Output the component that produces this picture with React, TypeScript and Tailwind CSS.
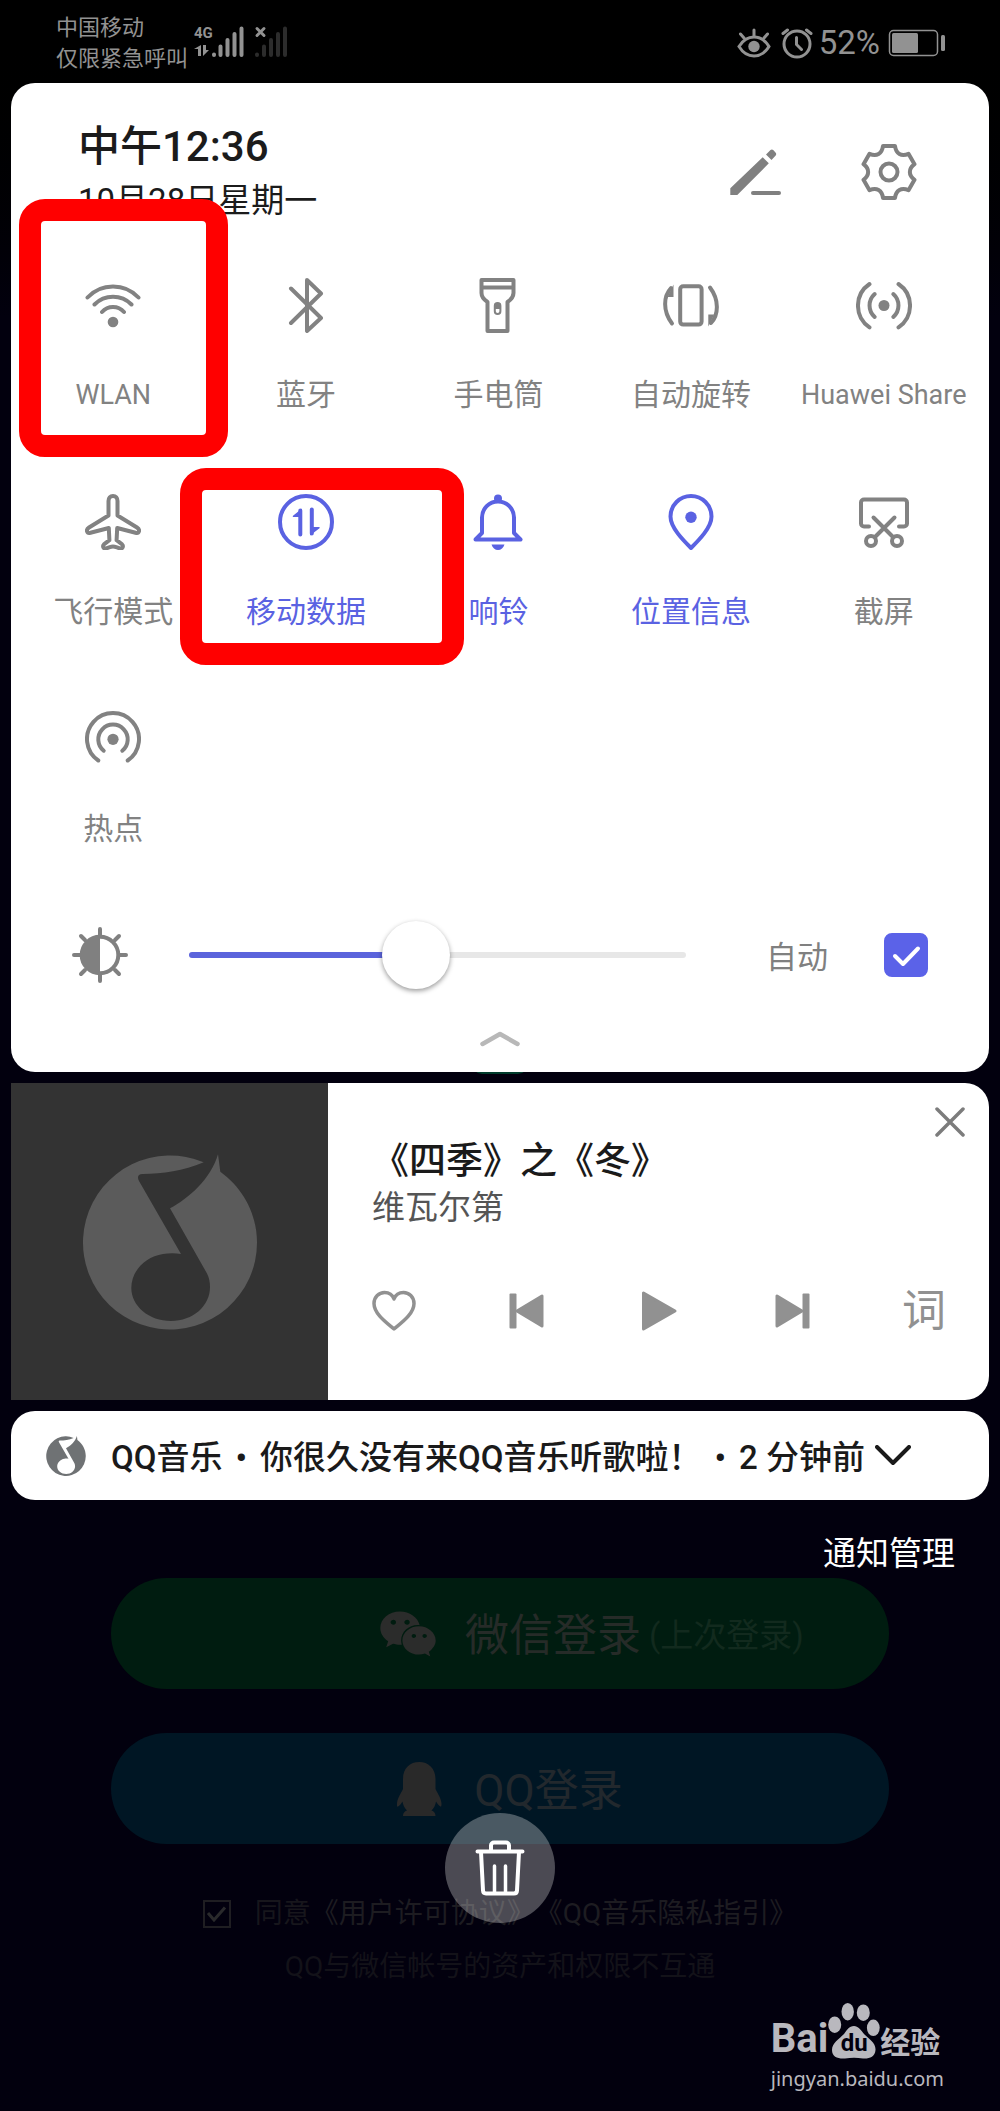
import { useState } from "react";
import type { CSSProperties, ReactNode } from "react";
import clsx from "clsx";
import { FaWeixin } from "react-icons/fa";

type Tile = {
  label: string;
  active?: boolean;
  latin?: boolean;
  icon: ReactNode;
};

const TILES: Tile[] = [
  {
    label: "WLAN",
    latin: true,
    icon: (
      <>
        <path d="M2.5 20.5A35 35 0 0 1 53.5 20.5M9.5 27.5A26 26 0 0 1 46.5 27.5M17 35A14.6 14.6 0 0 1 39 35" />
        <circle cx="28" cy="45" r="5.3" fill="currentColor" stroke="none" />
      </>
    ),
  },
  {
    label: "蓝牙",
    icon: <path d="M13 11.5L43 41 29 54V3L43 16.5 13 46" />,
  },
  {
    label: "手电筒",
    icon: (
      <>
        <path d="M11.5 3h32v13c0 4-3 7-6 9v29h-20V25c-3-2-6-5-6-9zM11.5 10.5h32" />
        <rect x="24.8" y="26" width="5.6" height="11" rx="2.8" strokeWidth="2" />
        <rect x="24.8" y="26" width="5.6" height="6" fill="currentColor" stroke="none" />
      </>
    ),
  },
  {
    label: "自动旋转",
    icon: (
      <>
        <rect x="17.2" y="9.2" width="21.4" height="38.4" rx="3" />
        <path d="M9 46.5C-.5 34 .5 19 8 11M47 10.5C56.5 23 55.5 38 48 46" />
        <path d="M10.5 7.5V20H4.5zM45.3 49.5V37.5h6z" fill="currentColor" stroke="none" />
      </>
    ),
  },
  {
    label: "Huawei Share",
    latin: true,
    icon: (
      <>
        <circle cx="28" cy="28.5" r="5.5" fill="currentColor" stroke="none" />
        <path d="M18.7 17a15.4 15.4 0 0 0 0 23M37.3 17a15.4 15.4 0 0 1 0 23" />
        <path d="M13.5 7a26.2 26.2 0 0 0 0 43.4M42.5 7a26.2 26.2 0 0 1 0 43.4" />
      </>
    ),
  },
  {
    label: "飞行模式",
    icon: (
      <path d="M28 2c-2.8 0-4.5 2-4.5 5v14.5L4 33.5c-2 1.3-2.4 2.6-1.9 4 .4 1.3 1.8 1.7 3.4 1.3L23.8 34l.6 12.2-5.5 4.2c-1.5 1.4-.7 4 1 4 2.8 0 5.4-1.9 8.1-1.9s5.3 1.9 8.1 1.9c1.7 0 2.5-2.6 1-4l-5.5-4.2.6-12.2 18.3 4.8c1.6.4 3 0 3.4-1.3.5-1.4.1-2.7-1.9-4L32.5 21.5V7c0-3-1.7-5-4.5-5z" />
    ),
  },
  {
    label: "移动数据",
    active: true,
    icon: (
      <>
        <circle cx="28" cy="28" r="26" />
        <path d="M22.3 16.5v24M33.8 15.5v24" />
        <path d="M24 14.5V23h-8.5c-.8 0-1-.8-.5-1.3zM32 41.5V33h9c.8 0 1 .8.5 1.3z" fill="currentColor" stroke="none" />
      </>
    ),
  },
  {
    label: "响铃",
    active: true,
    icon: (
      <>
        <path d="M5.5 45.5L12 39V23.5a16 16 0 0 1 32 0V39l6.5 6.5z" />
        <circle cx="28" cy="4.5" r="4" fill="currentColor" stroke="none" />
        <path d="M21.5 50.5h13c-1 3.5-3.5 5.5-6.5 5.5s-5.5-2-6.5-5.5z" fill="currentColor" stroke="none" />
      </>
    ),
  },
  {
    label: "位置信息",
    active: true,
    icon: (
      <>
        <path d="M28 54C20 46 7.5 33.5 7.5 22.5a20.5 20.5 0 0 1 41 0C48.5 33.5 36 46 28 54z" />
        <circle cx="28" cy="23.3" r="5.7" fill="currentColor" stroke="none" />
      </>
    ),
  },
  {
    label: "截屏",
    icon: (
      <>
        <path d="M13 32.5H8a3 3 0 0 1-3-3v-21a3 3 0 0 1 3-3h40a3 3 0 0 1 3 3v21a3 3 0 0 1-3 3h-5" />
        <path d="M17.5 23.5L37 43M38.5 23.5L19 43" />
        <circle cx="15" cy="47" r="5" />
        <circle cx="41" cy="47" r="5" />
      </>
    ),
  },
  {
    label: "热点",
    icon: (
      <>
        <circle cx="28" cy="28.3" r="5.6" fill="currentColor" stroke="none" />
        <path d="M13.3 49.5a26 26 0 1 1 29.4 0" />
        <path d="M18.7 39.7a14.7 14.7 0 1 1 18.6 0" />
      </>
    ),
  },
];

const Icon = ({ children }: { children: ReactNode }) => (
  <svg
    viewBox="0 0 56 56"
    className="size-14 shrink-0"
    fill="none"
    stroke="currentColor"
    strokeWidth="4"
    strokeLinecap="round"
    strokeLinejoin="round"
    aria-hidden="true"
  >
    {children}
  </svg>
);

const NoteLogo = ({ className }: { className: string }) => (
  <svg viewBox="0 0 174 176" className={className} fill="currentColor" aria-hidden="true">
    <path d="M120.7 8.3C100 17 80 20 59.5 20C55 20 54 23 56 27L98 100C91 98.8 85 99.3 80 100C62 103 48.3 117 48.3 134C48.3 152 66 167 88 167C110 167 127 152 127 133C127 128 126 123 124 119.5L87 54.3C105 45 128 25 135 .3L137.3 17.7C160 34 174 60 174 88.5A87 87 0 1 1 120.7 8.3z" />
  </svg>
);

const StatusBar = () => (
  <header className="flex h-[83px] items-start justify-between pr-[54px] pl-14 text-[#929292]">
    <div className="flex">
      <div className="pt-3 text-[22px] leading-[31px]">
        <p>中国移动</p>
        <p>仅限紧急呼叫</p>
      </div>
      <div className="ml-1.5 flex pt-[26px]">
        <div className="w-[17px]">
          <p className="text-[15px] leading-[14px] font-bold">4G</p>
          <svg viewBox="0 0 16 12" className="mt-1 h-3 w-4" fill="currentColor" aria-hidden="true">
            <path d="M7 1v11H4V5H0zM9 1h3v5h3l-6 6z" />
          </svg>
        </div>
        <svg viewBox="0 0 34 31" className="h-[31px] w-[34px]" stroke="currentColor" strokeWidth="4" strokeLinecap="round" aria-hidden="true">
          <path d="M3 28.5v.5M9.5 20.5V29M16.5 14V29M23.5 8V29M30.5 2.5V29" />
        </svg>
        <svg viewBox="0 0 34 31" className="ml-[9px] h-[31px] w-[34px]" stroke="#2c2c2c" strokeWidth="4" strokeLinecap="round" aria-hidden="true">
          <path d="M3 28.5v.5M10 20.5V29M17 14V29M24 8V29M31 2.5V29" />
          <path d="M3 2.5l7 7M10 2.5l-7 7" stroke="#929292" strokeWidth="3" />
        </svg>
      </div>
    </div>

    <div className="flex h-[86px] items-center">
      <svg viewBox="0 0 34 30" className="h-[30px] w-[34px]" fill="none" stroke="currentColor" strokeWidth="3" strokeLinecap="round" aria-hidden="true">
        <path d="M2 18.5C6 12 11 9 17 9s11 3 15 9.5C28 25 23 28 17 28S6 25 2 18.5z" />
        <path d="M17 2v6M3.5 6l3.5 4M30.5 6L27 10" />
        <circle cx="17" cy="18.5" r="5.7" fill="currentColor" stroke="none" />
      </svg>
      <svg viewBox="0 0 32 32" className="ml-2.5 size-8" fill="none" stroke="currentColor" strokeWidth="3" strokeLinecap="round" aria-hidden="true">
        <circle cx="16" cy="17" r="13" />
        <path d="M15.5 10.5v7l5 5M2 6.5L6.5 3M30 6.5L25.5 3" />
      </svg>
      <span className="ml-1.5 text-[33px] leading-10">52%</span>
      <svg viewBox="0 0 58 28" className="ml-2 h-7 w-[58px]" fill="currentColor" aria-hidden="true">
        <rect x="1.5" y="1.5" width="48" height="25" rx="4" fill="none" stroke="currentColor" strokeWidth="1.5" />
        <rect x="4" y="4" width="26" height="20" rx="1.5" />
        <rect x="53" y="6" width="4" height="16" rx="1.5" />
      </svg>
    </div>
  </header>
);

const QuickSettings = () => {
  const [brightness, setBrightness] = useState(45);
  const [auto, setAuto] = useState(true);

  return (
    <section className="relative">
      {/* Glow of the app below, peeking out under the panel */}
      <div className="absolute -bottom-0.5 left-1/2 -z-10 h-5 w-14 -translate-x-1/2 rounded-full bg-[#003d2c]" />

      <div className="rounded-3xl bg-white pt-10 pb-[25px]">
        <div className="flex items-center justify-between pr-[72px] pl-[67px]">
          <div className="text-[#1b1b1b]">
            <h1 className="text-[42px] leading-[48px] font-medium">中午12:36</h1>
            <p className="mt-2.5 text-[33px] leading-10">10月28日星期一</p>
          </div>
          <div className="flex gap-[77px] text-[#808080]">
            <button type="button" aria-label="编辑">
              <Icon>
                <path d="M2.3 44.3L34.7 13.2 40.8 19.3 9.3 51H2.3zM38 10.5l4.5-4.5q1.5-1 3 .3l2.2 2.4q1 1.3 0 2.8L43.5 16z" fill="currentColor" stroke="none" />
                <path d="M25 49h26" />
              </Icon>
            </button>
            <button type="button" aria-label="设置">
              <Icon>
                <path d="M22 2H34C35 9.8 40.3 12.8 47.5 9.8L53.5 20.2C47.3 24.9 47.3 31.1 53.5 35.8L47.5 46.2C40.3 43.2 35 46.2 34 54H22C21 46.2 15.7 43.2 8.5 46.2L2.5 35.8C8.7 31.1 8.7 24.9 2.5 20.2L8.5 9.8C15.7 12.8 21 9.8 22 2z" />
                <circle cx="28" cy="28" r="8.5" />
              </Icon>
            </button>
          </div>
        </div>

        <div className="mt-14 grid grid-cols-5 gap-y-[79px] pr-[9px] pl-1.5">
          {TILES.map(({ label, active, latin, icon }) => (
            <button
              key={label}
              type="button"
              aria-pressed={!!active}
              className={clsx(
                "flex flex-col items-center gap-[42px]",
                active ? "text-[#5a62e2]" : "text-[#828282]"
              )}
            >
              <Icon>{icon}</Icon>
              <span className={clsx("leading-10 whitespace-nowrap", latin ? "text-[27px]" : "text-[30px]")}>
                {label}
              </span>
            </button>
          ))}
        </div>

        {/* Brightness */}
        <div className="mt-[72px] flex items-center px-[61px] text-[#808080]">
          <Icon>
            <circle cx="28" cy="28" r="18.3" />
            <path d="M28 10a18 18 0 0 0 0 36z" fill="currentColor" stroke="none" />
            <path d="M28 2v6M28 48v6M2 28h6M48 28h6M9 9l4 4M47 9l-4 4M9 47l4-4M47 47l-4-4" />
          </Icon>
          <input
            type="range"
            aria-label="亮度"
            value={brightness}
            onChange={(e) => setBrightness(Number(e.target.value))}
            style={{ "--fill": `${brightness}%` } as CSSProperties}
            className="ml-[61px] h-[68px] min-w-0 flex-1 appearance-none bg-transparent [&::-webkit-slider-runnable-track]:h-1.5 [&::-webkit-slider-runnable-track]:rounded-full [&::-webkit-slider-runnable-track]:bg-[linear-gradient(to_right,#5b64dc_var(--fill),#e7e7e7_var(--fill))] [&::-webkit-slider-thumb]:mt-[-31px] [&::-webkit-slider-thumb]:size-[68px] [&::-webkit-slider-thumb]:appearance-none [&::-webkit-slider-thumb]:rounded-full [&::-webkit-slider-thumb]:bg-white [&::-webkit-slider-thumb]:shadow-[0_2px_5px_rgba(0,0,0,0.4)]"
          />
          <label htmlFor="auto" className="ml-20 pt-1.5 text-[31px] leading-10">
            自动
          </label>
          <span className="ml-14 grid size-11">
            <input
              id="auto"
              type="checkbox"
              checked={auto}
              onChange={(e) => setAuto(e.target.checked)}
              className="peer col-start-1 row-start-1 appearance-none rounded-lg border-2 border-[#5b62e8] checked:bg-[#5b62e8]"
            />
            <svg viewBox="0 0 44 44" className="pointer-events-none invisible col-start-1 row-start-1 peer-checked:visible" fill="none" stroke="white" strokeWidth="4" strokeLinecap="round" strokeLinejoin="round" aria-hidden="true">
              <path d="M11 23l8 8L34 15.5" />
            </svg>
          </span>
        </div>

        <button type="button" aria-label="收起" className="mx-auto mt-[42px] block text-[#b8b8b8]">
          <svg viewBox="0 0 40 16" className="h-4 w-10" fill="none" stroke="currentColor" strokeWidth="4.5" strokeLinecap="round" strokeLinejoin="round">
            <path d="M2.5 13L20 3l17.5 10" />
          </svg>
        </button>
      </div>

      {/* Highlight frames */}
      <div className="pointer-events-none absolute top-[116px] left-2 h-[258px] w-[209px] rounded-[26px] border-[22px] border-[#ff0000]" />
      <div className="pointer-events-none absolute top-[385px] left-[169px] h-[197px] w-[284px] rounded-[26px] border-[22px] border-[#ff0000]" />
    </section>
  );
};

const MediaCard = () => (
  <section className="relative mt-[11px] flex overflow-hidden rounded-r-3xl bg-white">
    <div className="flex size-[317px] shrink-0 items-center justify-center bg-[#333333] text-[#5b5b5b]">
      <NoteLogo className="h-[176px] w-[174px]" />
    </div>
    <div className="flex-1 pt-[55px] pr-[43px] pl-11">
      <h2 className="text-[37px] leading-[48px] font-medium text-[#1a1a1a]">《四季》之《冬》</h2>
      <p className="text-[33px] leading-11 text-[#555555]">维瓦尔第</p>
      <div className="mt-[59px] flex justify-between text-[#919191]">
        <button type="button" aria-label="收藏">
          <svg viewBox="0 0 44 44" className="size-11" fill="none" stroke="currentColor" strokeWidth="3.5" strokeLinejoin="round">
            <path d="M22 40C15 34 2 25 2 14.5 2 8 7 3.5 12.5 3.5c4.5 0 8 2.5 9.5 6.5 1.5-4 5-6.5 9.5-6.5C37 3.5 42 8 42 14.5 42 25 29 34 22 40z" />
          </svg>
        </button>
        <button type="button" aria-label="上一首">
          <svg viewBox="0 0 44 44" className="size-11" fill="currentColor" stroke="currentColor" strokeLinejoin="round">
            <rect x="4.5" y="4.5" width="7" height="35" rx="1" stroke="none" />
            <path d="M37 7v30L12 22z" strokeWidth="3" />
          </svg>
        </button>
        <button type="button" aria-label="播放">
          <svg viewBox="0 0 44 44" className="size-11" fill="currentColor" stroke="currentColor" strokeWidth="3" strokeLinejoin="round">
            <path d="M6.5 4v36L38 22z" />
          </svg>
        </button>
        <button type="button" aria-label="下一首">
          <svg viewBox="0 0 44 44" className="size-11" fill="currentColor" stroke="currentColor" strokeLinejoin="round">
            <rect x="32.5" y="4.5" width="7" height="35" rx="1" stroke="none" />
            <path d="M7 7v30l25-15z" strokeWidth="3" />
          </svg>
        </button>
        <button type="button" className="text-[44px] leading-11">
          词
        </button>
      </div>
    </div>
    <button type="button" aria-label="关闭" className="absolute top-6 right-6 text-[#7c7c7c]">
      <svg viewBox="0 0 30 30" className="size-[30px]" stroke="currentColor" strokeWidth="3.5" strokeLinecap="round">
        <path d="M2 2l26 26M28 2L2 28" />
      </svg>
    </button>
  </section>
);

const Notification = () => (
  <section className="mt-[11px] flex h-[89px] items-center rounded-3xl bg-white pl-[35px] text-[#1a1a1a]">
    <NoteLogo className="size-10 text-[#6f7274]" />
    <p className="ml-[25px] flex gap-[13px] pt-1 text-[33px] leading-11 font-medium whitespace-nowrap">
      <span>QQ音乐</span>
      <span>•</span>
      <span>你很久没有来QQ音乐听歌啦！</span>
      <span>•</span>
      <span>2 分钟前</span>
    </p>
    <button type="button" aria-label="展开" className="ml-2.5">
      <svg viewBox="0 0 36 22" className="h-[22px] w-9" fill="none" stroke="currentColor" strokeWidth="4" strokeLinecap="round" strokeLinejoin="round">
        <path d="M2 2l16 16L34 2" />
      </svg>
    </button>
  </section>
);

const LoginBackdrop = () => (
  <main className="mt-0.5 px-[111px]">
    <button type="button" className="flex h-[111px] w-full items-center justify-center rounded-full bg-[#001c10] pl-5 text-[#262b28]">
      <FaWeixin className="size-[58px] text-[#2b2c2b]" />
      <span className="relative ml-7 pt-1 text-[44px] leading-[56px]">
        微信登录
        <span className="absolute top-3 left-full pl-2 text-[33px] leading-10 whitespace-nowrap text-[#122a1e]">
          (上次登录)
        </span>
      </span>
    </button>

    <div className="relative mt-11">
      <button type="button" className="flex h-[111px] w-full items-center justify-center rounded-full bg-[#001624] pl-5 text-[#22282d]">
        <svg viewBox="0 0 45 54" className="h-[54px] w-[45px]" fill="#292929" aria-hidden="true">
          <path d="M22.3 0C31 0 38.5 6 38.5 17V27C41 32 44.5 37 44.5 42 44.5 44 44 45 43.5 44.5 41.5 43.5 40 41 39 39.5 38.5 43 37 46 34.5 48.5 37 49.5 38.5 51 38.5 54H6C6 51 7.5 49.5 10 48.5 7.5 46 6 43 5.5 39.5 4.5 41 3 43.5 1 44.5 0 45 0 44 0 42 0 37 3.5 32 6 27V17C6 6 13 0 22.3 0Z" />
        </svg>
        <span className="ml-8 pt-1 text-[44px] leading-[56px]">QQ登录</span>
      </button>
      <button
        type="button"
        aria-label="清除全部"
        className="absolute top-20 left-1/2 flex size-[110px] -translate-x-1/2 items-center justify-center rounded-full bg-white/29 text-white"
      >
        <svg viewBox="0 0 50 56" className="h-14 w-[50px]" fill="none" stroke="currentColor" strokeWidth="4" strokeLinecap="round" strokeLinejoin="round">
          <path d="M2.5 11.5h45M16 11V5.5a3 3 0 0 1 3-3h12a3 3 0 0 1 3 3V11M6 12l2 38.5q.2 3 3 3h28q2.8 0 3-3L44 12" />
          <path d="M19.5 26v26M30.5 26v26" strokeWidth="3.5" />
        </svg>
      </button>
    </div>

    <div className="mt-[50px] flex items-center justify-center text-[28px] leading-10 whitespace-nowrap text-[#1d1c21]">
      <span className="grid size-7">
        <input
          id="agree"
          type="checkbox"
          defaultChecked
          className="peer col-start-1 row-start-1 appearance-none border-2 border-[#1f1e22]"
        />
        <svg viewBox="0 0 28 28" className="pointer-events-none invisible col-start-1 row-start-1 peer-checked:visible" fill="none" stroke="#2a2a2c" strokeWidth="3" aria-hidden="true">
          <path d="M5 13l6 7L22 7.5" />
        </svg>
      </span>
      <label htmlFor="agree" className="ml-6 text-[#17161c]">
        同意
      </label>
      <a href="#license">《用户许可协议》</a>
      <a href="#privacy">《QQ音乐隐私指引》</a>
    </div>
    <p className="mt-[13px] text-center text-[28px] leading-10 text-[#131219]">
      QQ与微信帐号的资产和权限不互通
    </p>
  </main>
);

const Watermark = () => (
  <footer className="mt-4 ml-auto w-fit pr-14 pb-3 text-[#b9b8be]">
    <div className="flex h-14 items-end">
      <span className="text-[40px] leading-10 font-bold">Bai</span>
      <span className="relative">
        <svg viewBox="0 0 52 56" className="h-14 w-[52px]" fill="currentColor" aria-hidden="true">
          <ellipse cx="6.7" cy="21.7" rx="6.5" ry="8.3" />
          <ellipse cx="19.7" cy="8.7" rx="6.2" ry="8.7" />
          <ellipse cx="35.3" cy="9.7" rx="6.5" ry="8.3" />
          <ellipse cx="45.3" cy="24.8" rx="6.4" ry="8.3" />
          <path d="M26 23C30 23 33 27 36 31C41 36 48 40 47.5 47C47 54 41 56 35 55.5C29 54.5 23 54.5 17 55.5C10 56 4 54 4 47C4 40 11 36 16 31C19 27 21 23 26 23z" />
        </svg>
        <span className="absolute inset-x-0 bottom-1 text-center text-[24px] leading-6 font-bold text-[#02000e]">du</span>
      </span>
      <span className="text-[30px] leading-8 font-bold">经验</span>
    </div>
    <p className="mt-1 font-[Noto_Sans] text-[20px] leading-8">jingyan.baidu.com</p>
  </footer>
);

const App = () => (
  <div className="isolate min-h-screen bg-linear-to-b from-black to-[#02000e] to-15% font-[Roboto,'Noto_Sans_CJK_SC',sans-serif]">
    <StatusBar />
    <div className="px-[11px]">
      <QuickSettings />
      <MediaCard />
      <Notification />
      <div className="mt-8 flex justify-end pr-[34px]">
        <button type="button" className="text-[33px] leading-11 text-white">
          通知管理
        </button>
      </div>
    </div>
    <LoginBackdrop />
    <Watermark />
  </div>
);

export default App;
